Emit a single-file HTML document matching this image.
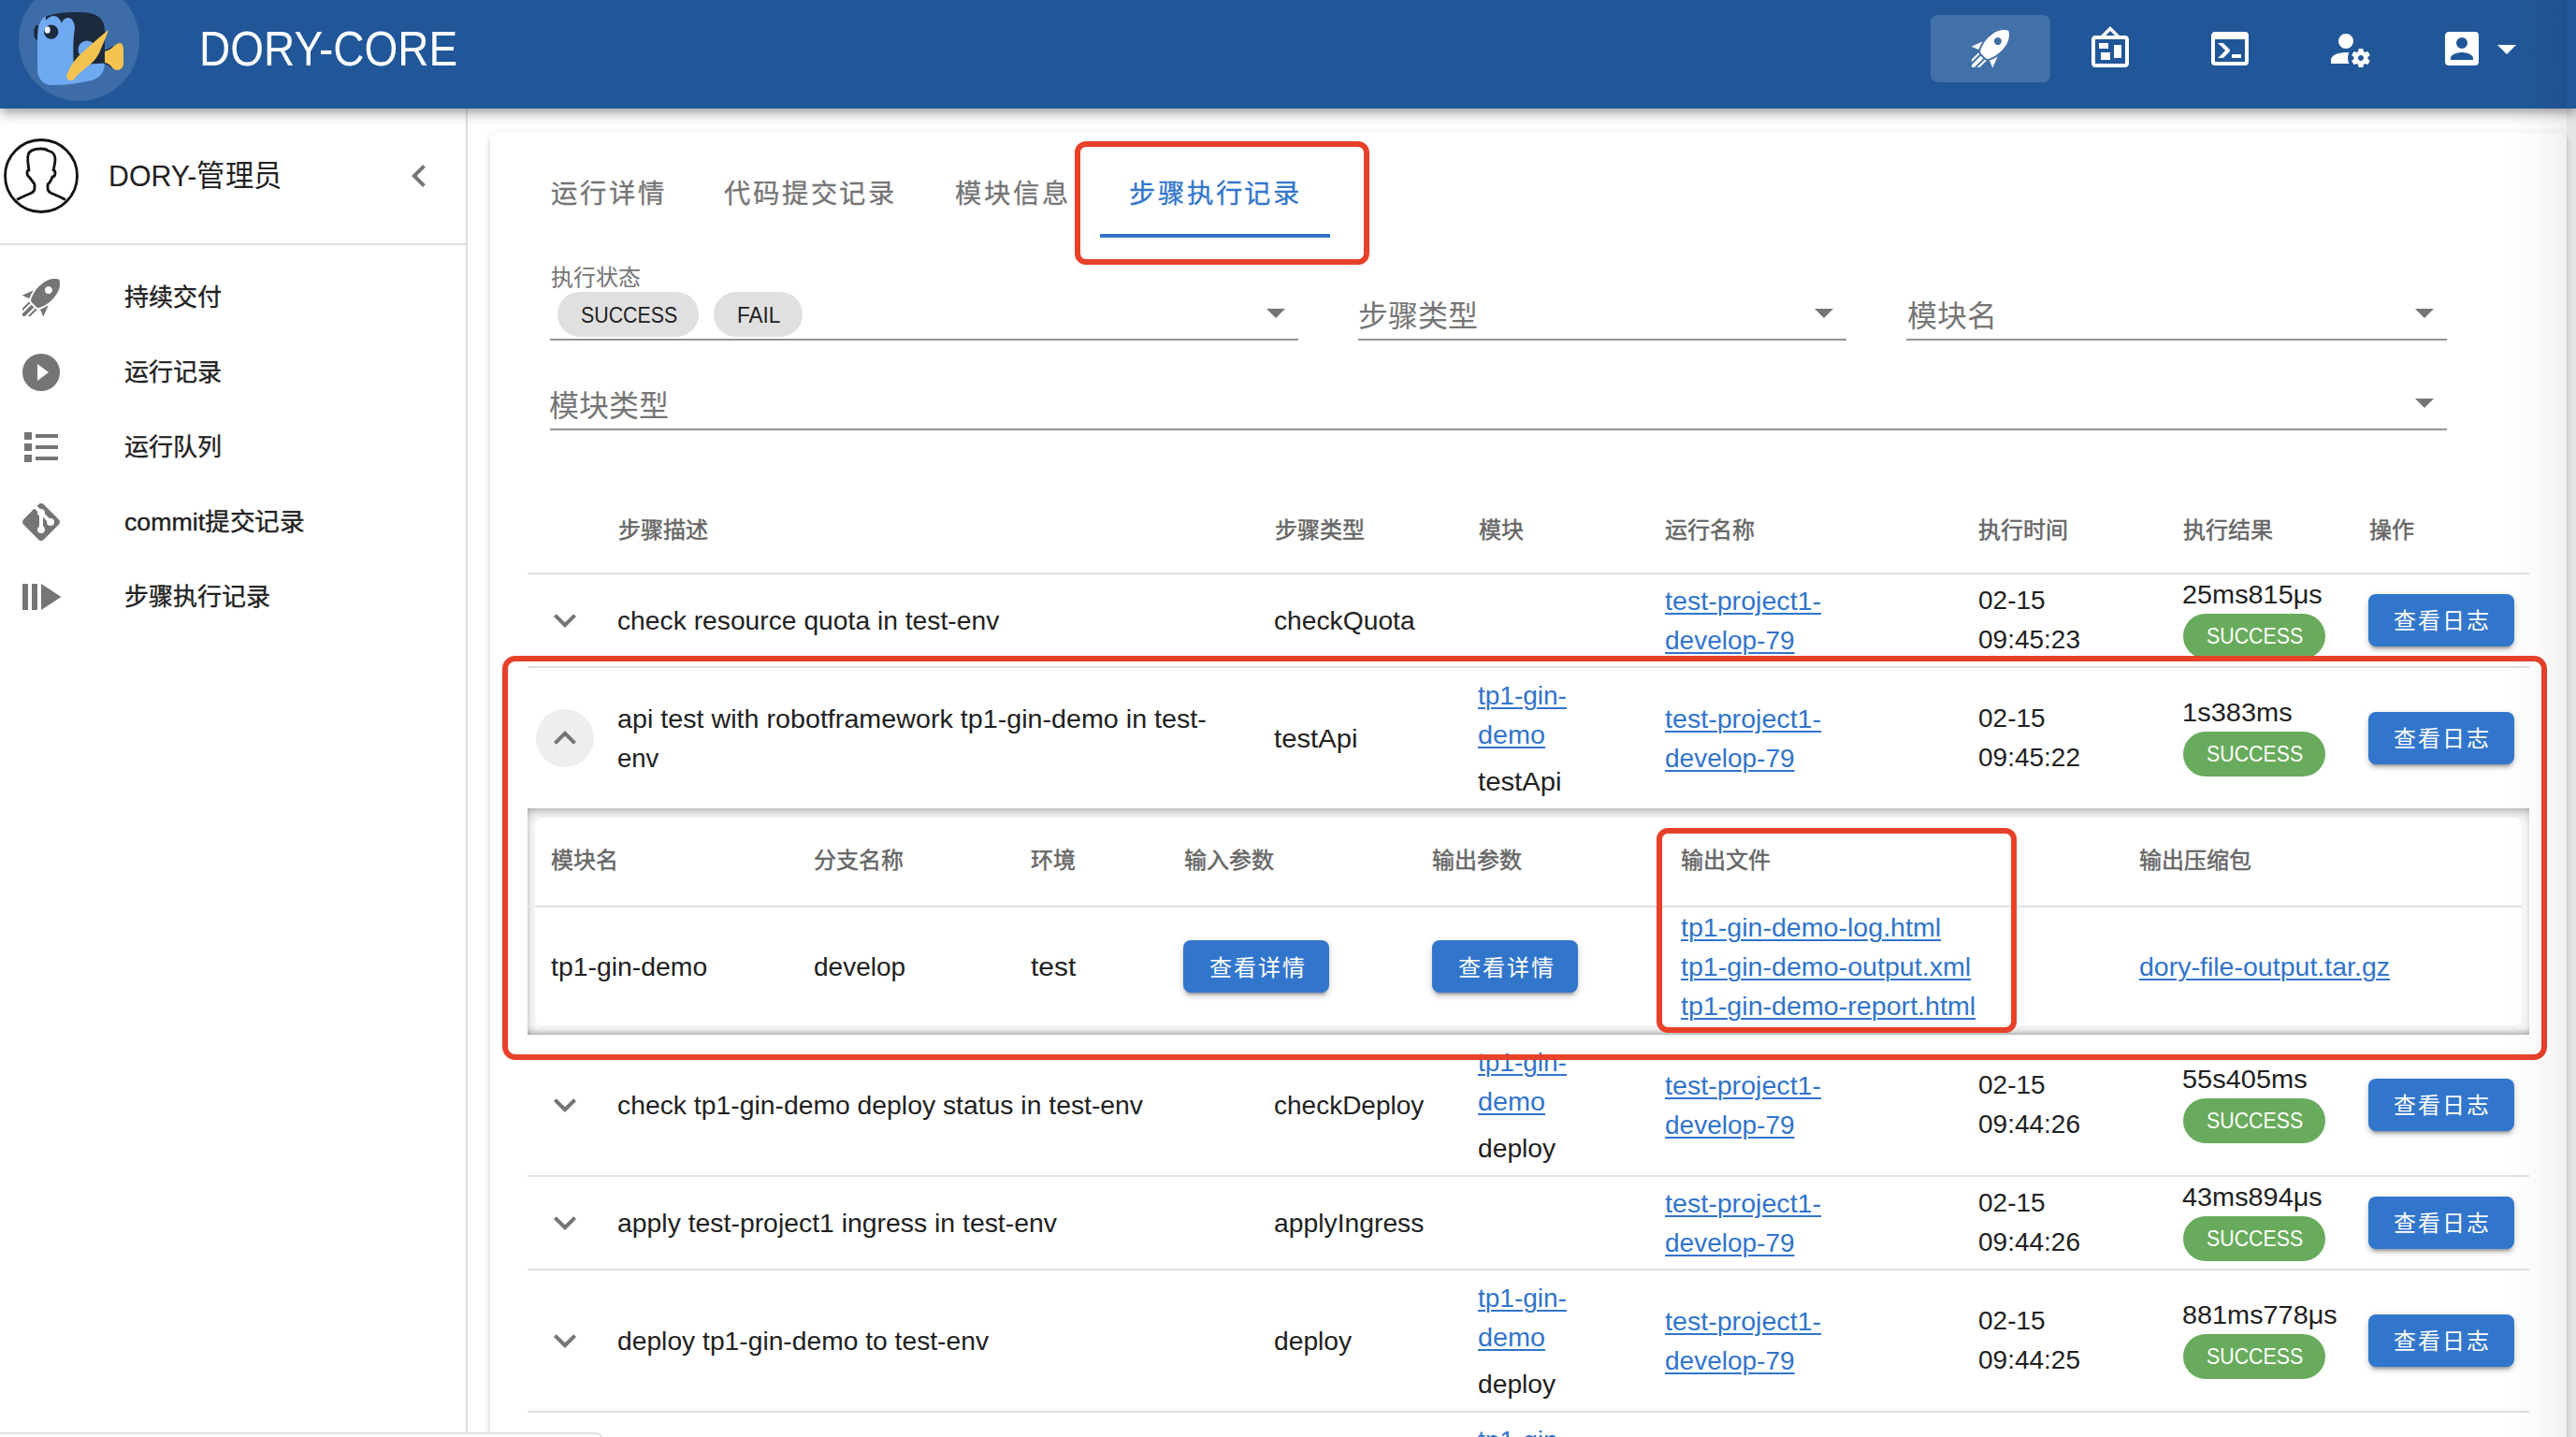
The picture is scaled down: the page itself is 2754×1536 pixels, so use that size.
<!DOCTYPE html>
<html lang="zh-CN"><head><meta charset="utf-8"><title>DORY-CORE</title>
<style>
html,body{margin:0;padding:0;width:2754px;height:1536px;overflow:hidden;background:#ffffff;}
body{position:relative;font-family:"Liberation Sans",sans-serif;}
.t{position:absolute;white-space:nowrap;transform-origin:0 50%;}
</style></head><body>
<div style="position:absolute;left:0px;top:0px;width:2754px;height:116px;background:#215799;border-radius:0px;z-index:3;box-shadow:0 4px 8px -2px rgba(0,0,0,.2),0 8px 10px 0 rgba(0,0,0,.14),0 2px 20px 0 rgba(0,0,0,.12);"></div>
<svg style="position:absolute;left:0;top:0;z-index:4" width="170" height="116" viewBox="0 0 170 116">
 <circle cx="84.5" cy="43.5" r="64.5" fill="rgba(255,255,255,.13)"/>
 <ellipse cx="39.5" cy="34.8" rx="3.3" ry="8" fill="#1c2a3e"/>
 <path fill="#6fa9f1" d="M40,43 C40,33 41,27 43,24 C45,20 47,18 49,17.5 L96,14 C106,15 112,22 112,32 L112,66 C112,76 108,83 98,86 C85,89 70,91 56,91 C46,91 40,84 40,74 Z"/>
 <path fill="#1c2a3e" d="M49,17.5 C62,13 82,12 96,14 C106,15.5 112,22 112,32 L112,67.5 C101,68 90,69 79,70 C78,58 78,40 80,31 C80,24 77,19 73,19 C70,19 67,21 66,25 C64,20 61,17 58,17 C54,17 51,19 49,22 Z"/>
 <circle cx="93" cy="53" r="9.5" fill="#6fa9f1"/>
 <circle cx="54.7" cy="34.1" r="7.7" fill="#1c2a3e"/>
 <ellipse cx="50.7" cy="32" rx="3" ry="3.8" fill="#e8f4ff"/>
 <path fill="none" stroke="#1c2a3e" stroke-width="1.6" d="M111,54.5 C115,54 118,52 121,49.5 M111,67.5 C115,68 118,70 120.5,72.5"/>
 <path fill="#f4c34f" d="M112,55 C116,54 119,52 121,50 C123,48 126,46 128,46 C131,46 132,49 132,53 L132,68 C132,72 129,75 125,75 C122,75 120,72 118,70 C116,68 114,67 112,67 Z"/>
 <path fill="#f4c34f" d="M116,32 C108,38 95,50 86,58 C79,65 75,71 73,77 C70,80 71,85 75,86 C78,86.5 80,85 81,82 C84,79 90,74 96,69 C101,65 105,60 108,52 C111,45 114,38 116,32 Z"/>
</svg>
<div style="position:absolute;left:2064px;top:16px;width:128px;height:72px;background:rgba(255,255,255,.15);border-radius:8px;z-index:4;"></div>
<svg style="position:absolute;left:2104px;top:28px;z-index:4" width="48" height="48" viewBox="0 0 24 24"><path fill="#ffffff" d="M13.13 22.19L11.5 18.36C13.07 17.78 14.54 17 15.9 16.09L13.13 22.19M5.64 12.5L1.81 10.87L7.91 8.1C7 9.46 6.22 10.93 5.64 12.5M21.61 2.39C21.61 2.39 16.66 .269 11 5.93C8.81 8.12 7.5 10.53 6.65 12.64C6.37 13.39 6.56 14.21 7.11 14.77L9.24 16.89C9.79 17.45 10.61 17.63 11.36 17.35C13.5 16.53 15.88 15.19 18.07 13C23.730 7.34 21.61 2.39 21.61 2.39M14.54 9.46C13.76 8.68 13.76 7.41 14.54 6.63S16.59 5.85 17.37 6.63C18.14 7.410 18.15 8.68 17.37 9.46C16.59 10.24 15.32 10.24 14.54 9.46M8.88 16.53L7.47 15.12L8.88 16.53M6.24 22L9.88 18.36C9.54 18.27 9.21 18.12 8.91 17.91L4.83 22H6.24M2 22H3.41L8.18 17.24L6.76 15.83L2 20.59V22M2 19.17L6.09 15.09C5.88 14.79 5.73 14.47 5.64 14.12L2 17.76V19.17Z"/></svg>
<svg style="position:absolute;left:2232px;top:28px;z-index:4" width="48" height="48" viewBox="0 0 24 24"><path fill="#ffffff" d="M12.04 2.5L9.53 5H14.53L12.04 2.5M4 7V20H20V7H4M12 0L17 5V5H20C21.11 5 22 5.89 22 7V20C22 21.11 21.11 22 20 22H4C2.89 22 2 21.11 2 20V7C2 5.89 2.89 5 4 5H7L12 0M7 18V14H12V18H7M14 17V10H18V17H14M6 12V9H11V12H6Z"/></svg>
<svg style="position:absolute;left:2360px;top:28px;z-index:4" width="48" height="48" viewBox="0 0 24 24"><path fill="#ffffff" d="M20,19V7H4V19H20M20,3A2,2 0 0,1 22,5V19A2,2 0 0,1 20,21H4A2,2 0 0,1 2,19V5C2,3.89 2.9,3 4,3H20M13,17V15H18V17H13M9.58,13L5.57,9H8.4L11.7,12.3C12.09,12.69 12.09,13.33 11.7,13.72L8.42,17H5.59L9.58,13Z"/></svg>
<svg style="position:absolute;left:2488px;top:28px;z-index:4" width="48" height="48" viewBox="0 0 24 24"><path fill="#ffffff" d="M10 4A4 4 0 0 0 6 8A4 4 0 0 0 10 12A4 4 0 0 0 14 8A4 4 0 0 0 10 4M17 12C16.87 12 16.76 12.09 16.74 12.21L16.55 13.53C16.25 13.66 15.96 13.82 15.7 14L14.46 13.5C14.35 13.5 14.22 13.5 14.15 13.63L13.15 15.36C13.09 15.47 13.11 15.6 13.21 15.68L14.27 16.5C14.25 16.67 14.24 16.83 14.24 17C14.24 17.17 14.25 17.33 14.27 17.5L13.21 18.32C13.12 18.4 13.09 18.53 13.15 18.64L14.15 20.37C14.21 20.5 14.34 20.5 14.46 20.5L15.7 20C15.96 20.18 16.24 20.35 16.55 20.47L16.74 21.79C16.76 21.91 16.86 22 17 22H19C19.11 22 19.22 21.91 19.24 21.79L19.43 20.47C19.73 20.34 20 20.18 20.27 20L21.5 20.5C21.63 20.5 21.76 20.5 21.83 20.37L22.83 18.64C22.89 18.53 22.86 18.4 22.77 18.32L21.7 17.5C21.72 17.33 21.74 17.17 21.74 17C21.74 16.83 21.73 16.67 21.7 16.5L22.76 15.68C22.85 15.6 22.88 15.47 22.82 15.36L21.82 13.63C21.76 13.5 21.63 13.5 21.5 13.5L20.27 14C20 13.82 19.73 13.65 19.42 13.53L19.23 12.21C19.22 12.09 19.11 12 19 12H17M10 14C5.58 14 2 15.79 2 18V20H11.68A7 7 0 0 1 11 17A7 7 0 0 1 11.64 14.09C11.11 14.03 10.56 14 10 14M18 15.5C18.83 15.5 19.5 16.17 19.5 17C19.5 17.83 18.83 18.5 18 18.5C17.16 18.5 16.5 17.83 16.5 17C16.5 16.17 17.17 15.5 18 15.5Z"/></svg>
<svg style="position:absolute;left:2608px;top:28px;z-index:4" width="48" height="48" viewBox="0 0 24 24"><path fill="#ffffff" d="M6,17C6,15 10,14 12,14C14,14 18,15 18,17V18H6M15,9A3,3 0 0,1 12,12A3,3 0 0,1 9,9A3,3 0 0,1 12,6A3,3 0 0,1 15,9M3,5V19A2,2 0 0,0 5,21H19A2,2 0 0,0 21,19V5A2,2 0 0,0 19,3H5C3.89,3 3,3.9 3,5Z"/></svg>
<svg style="position:absolute;left:2656px;top:28px;z-index:4" width="48" height="48" viewBox="0 0 24 24"><path fill="#ffffff" d="M7,10L12,15L17,10H7Z"/></svg>
<div style="position:absolute;left:498px;top:116px;width:2px;height:1420px;background:#e0e0e0;border-radius:0px;z-index:1;"></div>
<svg style="position:absolute;left:0;top:140px;z-index:2" width="100" height="100" viewBox="0 140 100 100">
 <circle cx="44" cy="188" r="38.5" fill="none" stroke="#111" stroke-width="2.8"/>
 <path fill="none" stroke="#111" stroke-width="2.8" stroke-linejoin="round" d="M18,213.5 C24,210 30,208 34,206 C36,205 37,203 37,201 L37,197 C34,193 32,190 31,189 C29,188 29,186 29,184.5 C29,183 30,182 31,182 C30,176 29,170 30,166 C31,161 35,159 44,159 C48,159 50,160 51,161 C56,162 59,165 59,170 C59,174 58,178 57,182 C58,182 59,183 59,185 C59,187 58,189 56,189 C55,192 54,195 51,197 L51,201 C51,203 52,205 54,206 C58,208 64,210 70,213.5"/>
</svg>
<svg style="position:absolute;left:424px;top:164px;z-index:2" width="48" height="48" viewBox="0 0 24 24"><path fill="#757575" d="M15.41,16.58L10.83,12L15.41,7.41L14,6L8,12L14,18L15.41,16.58Z"/></svg>
<div style="position:absolute;left:0px;top:260px;width:498px;height:2px;background:#e0e0e0;border-radius:0px;z-index:1;"></div>
<svg style="position:absolute;left:20px;top:294px;z-index:2" width="48" height="48" viewBox="0 0 24 24"><path fill="#757575" d="M13.13 22.19L11.5 18.36C13.07 17.78 14.54 17 15.9 16.09L13.13 22.19M5.64 12.5L1.81 10.87L7.91 8.1C7 9.46 6.22 10.93 5.64 12.5M21.61 2.39C21.61 2.39 16.66 .269 11 5.93C8.81 8.12 7.5 10.53 6.65 12.64C6.37 13.39 6.56 14.21 7.11 14.77L9.24 16.89C9.79 17.45 10.61 17.63 11.36 17.35C13.5 16.53 15.88 15.19 18.07 13C23.730 7.34 21.61 2.39 21.61 2.39M14.54 9.46C13.76 8.68 13.76 7.41 14.54 6.63S16.59 5.85 17.37 6.63C18.14 7.410 18.15 8.68 17.37 9.46C16.59 10.24 15.32 10.24 14.54 9.46M8.88 16.53L7.47 15.12L8.88 16.53M6.24 22L9.88 18.36C9.54 18.27 9.21 18.12 8.91 17.91L4.83 22H6.24M2 22H3.41L8.18 17.24L6.76 15.83L2 20.59V22M2 19.17L6.09 15.09C5.88 14.79 5.73 14.47 5.64 14.12L2 17.76V19.17Z"/></svg>
<svg style="position:absolute;left:20px;top:374px;z-index:2" width="48" height="48" viewBox="0 0 24 24"><path fill="#757575" d="M10,16.5V7.5L16,12M12,2A10,10 0 0,0 2,12A10,10 0 0,0 12,22A10,10 0 0,0 22,12A10,10 0 0,0 12,2Z"/></svg>
<svg style="position:absolute;left:20px;top:454px;z-index:2" width="48" height="48" viewBox="0 0 24 24"><path fill="#757575" d="M3,4H7V8H3V4M9,5V7H21V5H9M3,10H7V14H3V10M9,11V13H21V11H9M3,16H7V20H3V16M9,17V19H21V17H9"/></svg>
<svg style="position:absolute;left:20px;top:534px;z-index:2" width="48" height="48" viewBox="0 0 24 24"><path fill="#757575" d="M2.6,10.59L8.38,4.8L10.07,6.5C9.83,7.35 10.22,8.28 11,8.73V14.27C10.4,14.61 10,15.26 10,16A2,2 0 0,0 12,18A2,2 0 0,0 14,16C14,15.26 13.6,14.61 13,14.27V9.41L15.07,11.5C15,11.65 15,11.82 15,12A2,2 0 0,0 17,14A2,2 0 0,0 19,12A2,2 0 0,0 17,10C16.82,10 16.65,10 16.5,10.07L13.93,7.5C14.19,6.57 13.71,5.55 12.78,5.16C12.35,5 11.9,4.96 11.5,5.07L9.8,3.38L10.59,2.6C11.37,1.81 12.63,1.81 13.41,2.6L21.4,10.59C22.19,11.37 22.19,12.63 21.4,13.41L13.41,21.4C12.63,22.19 11.37,22.19 10.59,21.4L2.6,13.41C1.81,12.63 1.81,11.37 2.6,10.59Z"/></svg>
<svg style="position:absolute;left:20px;top:614px;z-index:2" width="48" height="48" viewBox="0 0 24 24"><path fill="#757575" d="M2,5H5V19H2Z M7,5H10V19H7Z M12,5V19L22.7,12Z"/></svg>
<div style="position:absolute;left:524px;top:142px;width:2220px;height:1500px;background:#ffffff;border-radius:8px;z-index:0;box-shadow:0 6px 2px -4px rgba(0,0,0,.2),0 4px 4px 0 rgba(0,0,0,.14),0 2px 10px 0 rgba(0,0,0,.12);"></div>
<div style="position:absolute;left:1176px;top:250px;width:246px;height:4px;background:#3276cc;border-radius:0px;z-index:1;"></div>
<div style="position:absolute;left:596px;top:312px;width:151px;height:48px;background:#e0e0e0;border-radius:24px;z-index:1;"></div>
<div style="position:absolute;left:763px;top:312px;width:95px;height:48px;background:#e0e0e0;border-radius:24px;z-index:1;"></div>
<div style="position:absolute;left:588px;top:362px;width:800px;height:2px;background:#949494;border-radius:0px;z-index:1;"></div>
<svg style="position:absolute;left:1340px;top:310px;z-index:2" width="48" height="48" viewBox="0 0 24 24"><path fill="#757575" d="M7,10L12,15L17,10H7Z"/></svg>
<div style="position:absolute;left:1452px;top:362px;width:522px;height:2px;background:#949494;border-radius:0px;z-index:1;"></div>
<svg style="position:absolute;left:1926px;top:310px;z-index:2" width="48" height="48" viewBox="0 0 24 24"><path fill="#757575" d="M7,10L12,15L17,10H7Z"/></svg>
<div style="position:absolute;left:2038px;top:362px;width:578px;height:2px;background:#949494;border-radius:0px;z-index:1;"></div>
<svg style="position:absolute;left:2568px;top:310px;z-index:2" width="48" height="48" viewBox="0 0 24 24"><path fill="#757575" d="M7,10L12,15L17,10H7Z"/></svg>
<div style="position:absolute;left:588px;top:458px;width:2028px;height:2px;background:#949494;border-radius:0px;z-index:1;"></div>
<svg style="position:absolute;left:2568px;top:406px;z-index:2" width="48" height="48" viewBox="0 0 24 24"><path fill="#757575" d="M7,10L12,15L17,10H7Z"/></svg>
<div style="position:absolute;left:564px;top:612px;width:2140px;height:2px;background:#e0e0e0;border-radius:0px;z-index:1;"></div>
<svg style="position:absolute;left:580px;top:639px;z-index:2" width="48" height="48" viewBox="0 0 24 24"><path fill="#757575" d="M7.41,8.58L12,13.17L16.59,8.58L18,10L12,16L6,10L7.41,8.58Z"/></svg>
<div style="position:absolute;left:2334px;top:656px;width:152px;height:48px;background:#69ab5c;border-radius:24px;z-index:1;"></div>
<div style="position:absolute;left:2532px;top:635px;width:156px;height:56px;background:#3276cc;border-radius:8px;z-index:1;box-shadow:0 6px 2px -4px rgba(0,0,0,.2),0 4px 4px 0 rgba(0,0,0,.14),0 2px 10px 0 rgba(0,0,0,.12);"></div>
<div style="position:absolute;left:564px;top:712px;width:2140px;height:2px;background:#e0e0e0;border-radius:0px;z-index:1;"></div>
<div style="position:absolute;left:573px;top:758px;width:62px;height:62px;background:#eeeeee;border-radius:31px;z-index:1;"></div>
<svg style="position:absolute;left:580px;top:765px;z-index:2" width="48" height="48" viewBox="0 0 24 24"><path fill="#757575" d="M7.41,15.41L12,10.83L16.59,15.41L18,14L12,8L6,14L7.41,15.41Z"/></svg>
<div style="position:absolute;left:2334px;top:782px;width:152px;height:48px;background:#69ab5c;border-radius:24px;z-index:1;"></div>
<div style="position:absolute;left:2532px;top:761px;width:156px;height:56px;background:#3276cc;border-radius:8px;z-index:1;box-shadow:0 6px 2px -4px rgba(0,0,0,.2),0 4px 4px 0 rgba(0,0,0,.14),0 2px 10px 0 rgba(0,0,0,.12);"></div>
<div style="position:absolute;left:564px;top:864px;width:2140px;height:242px;background:#fbfbfb;border-radius:0px;z-index:1;box-shadow:inset 0 8px 16px -10px rgba(50,50,50,.75),inset 0 -7px 10px -7px rgba(50,50,50,.7),inset 10px 0 10px -8px rgba(0,0,0,.10);"></div>
<div style="position:absolute;left:572px;top:874px;width:2124px;height:222px;background:#ffffff;border-radius:8px;z-index:1;box-shadow:0 1px 4px 0 rgba(0,0,0,.05);"></div>
<div style="position:absolute;left:572px;top:968px;width:2124px;height:2px;background:#e0e0e0;border-radius:0px;z-index:1;"></div>
<div style="position:absolute;left:1265px;top:1005px;width:156px;height:56px;background:#3276cc;border-radius:8px;z-index:1;box-shadow:0 6px 2px -4px rgba(0,0,0,.2),0 4px 4px 0 rgba(0,0,0,.14),0 2px 10px 0 rgba(0,0,0,.12);"></div>
<div style="position:absolute;left:1531px;top:1005px;width:156px;height:56px;background:#3276cc;border-radius:8px;z-index:1;box-shadow:0 6px 2px -4px rgba(0,0,0,.2),0 4px 4px 0 rgba(0,0,0,.14),0 2px 10px 0 rgba(0,0,0,.12);"></div>
<svg style="position:absolute;left:580px;top:1157px;z-index:2" width="48" height="48" viewBox="0 0 24 24"><path fill="#757575" d="M7.41,8.58L12,13.17L16.59,8.58L18,10L12,16L6,10L7.41,8.58Z"/></svg>
<div style="position:absolute;left:2334px;top:1174px;width:152px;height:48px;background:#69ab5c;border-radius:24px;z-index:1;"></div>
<div style="position:absolute;left:2532px;top:1153px;width:156px;height:56px;background:#3276cc;border-radius:8px;z-index:1;box-shadow:0 6px 2px -4px rgba(0,0,0,.2),0 4px 4px 0 rgba(0,0,0,.14),0 2px 10px 0 rgba(0,0,0,.12);"></div>
<div style="position:absolute;left:564px;top:1256px;width:2140px;height:2px;background:#e0e0e0;border-radius:0px;z-index:1;"></div>
<svg style="position:absolute;left:580px;top:1283px;z-index:2" width="48" height="48" viewBox="0 0 24 24"><path fill="#757575" d="M7.41,8.58L12,13.17L16.59,8.58L18,10L12,16L6,10L7.41,8.58Z"/></svg>
<div style="position:absolute;left:2334px;top:1300px;width:152px;height:48px;background:#69ab5c;border-radius:24px;z-index:1;"></div>
<div style="position:absolute;left:2532px;top:1279px;width:156px;height:56px;background:#3276cc;border-radius:8px;z-index:1;box-shadow:0 6px 2px -4px rgba(0,0,0,.2),0 4px 4px 0 rgba(0,0,0,.14),0 2px 10px 0 rgba(0,0,0,.12);"></div>
<div style="position:absolute;left:564px;top:1356px;width:2140px;height:2px;background:#e0e0e0;border-radius:0px;z-index:1;"></div>
<svg style="position:absolute;left:580px;top:1409px;z-index:2" width="48" height="48" viewBox="0 0 24 24"><path fill="#757575" d="M7.41,8.58L12,13.17L16.59,8.58L18,10L12,16L6,10L7.41,8.58Z"/></svg>
<div style="position:absolute;left:2334px;top:1426px;width:152px;height:48px;background:#69ab5c;border-radius:24px;z-index:1;"></div>
<div style="position:absolute;left:2532px;top:1405px;width:156px;height:56px;background:#3276cc;border-radius:8px;z-index:1;box-shadow:0 6px 2px -4px rgba(0,0,0,.2),0 4px 4px 0 rgba(0,0,0,.14),0 2px 10px 0 rgba(0,0,0,.12);"></div>
<div style="position:absolute;left:564px;top:1508px;width:2140px;height:2px;background:#e0e0e0;border-radius:0px;z-index:1;"></div>
<svg style="position:absolute;left:580px;top:1561px;z-index:2" width="48" height="48" viewBox="0 0 24 24"><path fill="#757575" d="M7.41,8.58L12,13.17L16.59,8.58L18,10L12,16L6,10L7.41,8.58Z"/></svg>
<div style="position:absolute;left:2334px;top:1578px;width:152px;height:48px;background:#69ab5c;border-radius:24px;z-index:1;"></div>
<div style="position:absolute;left:2532px;top:1557px;width:156px;height:56px;background:#3276cc;border-radius:8px;z-index:1;box-shadow:0 6px 2px -4px rgba(0,0,0,.2),0 4px 4px 0 rgba(0,0,0,.14),0 2px 10px 0 rgba(0,0,0,.12);"></div>
<div style="position:absolute;left:-10px;top:1531px;width:655px;height:60px;background:#ffffff;border-radius:8px;z-index:3;border:2px solid #e3e3e3;box-sizing:border-box;"></div>
<div class="t" style="left:213px;top:22.0px;font-size:52px;line-height:60px;color:#ffffff;font-weight:400;z-index:4;transform:scaleX(0.8851);">DORY-CORE</div>
<div class="t" style="left:115.7px;top:167.9px;font-size:32px;line-height:40px;color:#212121;font-weight:400;z-index:2;transform:scaleX(0.9470);">DORY-管理员</div>
<div class="t" style="left:133px;top:302.0px;font-size:26px;line-height:32px;color:#212121;font-weight:500;z-index:2;-webkit-text-stroke:0.35px #212121;">持续交付</div>
<div class="t" style="left:133px;top:382.0px;font-size:26px;line-height:32px;color:#212121;font-weight:500;z-index:2;-webkit-text-stroke:0.35px #212121;">运行记录</div>
<div class="t" style="left:133px;top:462.0px;font-size:26px;line-height:32px;color:#212121;font-weight:500;z-index:2;-webkit-text-stroke:0.35px #212121;">运行队列</div>
<div class="t" style="left:133px;top:542.0px;font-size:26px;line-height:32px;color:#212121;font-weight:500;z-index:2;-webkit-text-stroke:0.35px #212121;transform:scaleX(1.0273);">commit提交记录</div>
<div class="t" style="left:133px;top:622.0px;font-size:26px;line-height:32px;color:#212121;font-weight:500;z-index:2;-webkit-text-stroke:0.35px #212121;">步骤执行记录</div>
<div class="t" style="left:588.6px;top:187.3px;font-size:28px;line-height:42px;color:#757575;font-weight:500;z-index:2;letter-spacing:2.5px;-webkit-text-stroke:0.3px #757575;transform:scaleX(1.0120);">运行详情</div>
<div class="t" style="left:773.5px;top:187.3px;font-size:28px;line-height:42px;color:#757575;font-weight:500;z-index:2;letter-spacing:2.5px;-webkit-text-stroke:0.3px #757575;transform:scaleX(1.0120);">代码提交记录</div>
<div class="t" style="left:1021px;top:187.3px;font-size:28px;line-height:42px;color:#757575;font-weight:500;z-index:2;letter-spacing:2.5px;-webkit-text-stroke:0.3px #757575;transform:scaleX(1.0120);">模块信息</div>
<div class="t" style="left:1206.8px;top:187.3px;font-size:28px;line-height:42px;color:#3276cc;font-weight:500;z-index:2;letter-spacing:2.5px;-webkit-text-stroke:0.3px #3276cc;transform:scaleX(1.0120);">步骤执行记录</div>
<div class="t" style="left:588.6px;top:281.2px;font-size:24px;line-height:32px;color:#757575;font-weight:400;z-index:2;">执行状态</div>
<div class="t" style="left:621px;top:320.7px;font-size:24px;line-height:32px;color:#212121;font-weight:400;z-index:2;transform:scaleX(0.8894);">SUCCESS</div>
<div class="t" style="left:787.5px;top:320.7px;font-size:24px;line-height:32px;color:#212121;font-weight:400;z-index:2;transform:scaleX(0.9399);">FAIL</div>
<div class="t" style="left:1451.5px;top:317.9px;font-size:32px;line-height:40px;color:#757575;font-weight:400;z-index:2;">步骤类型</div>
<div class="t" style="left:2039px;top:317.9px;font-size:32px;line-height:40px;color:#757575;font-weight:400;z-index:2;">模块名</div>
<div class="t" style="left:587px;top:413.9px;font-size:32px;line-height:40px;color:#757575;font-weight:400;z-index:2;">模块类型</div>
<div class="t" style="left:661.3px;top:550.7px;font-size:24px;line-height:32px;color:#666666;font-weight:400;z-index:2;-webkit-text-stroke:0.5px #666666;">步骤描述</div>
<div class="t" style="left:1362.8px;top:550.7px;font-size:24px;line-height:32px;color:#666666;font-weight:400;z-index:2;-webkit-text-stroke:0.5px #666666;">步骤类型</div>
<div class="t" style="left:1581px;top:550.7px;font-size:24px;line-height:32px;color:#666666;font-weight:400;z-index:2;-webkit-text-stroke:0.5px #666666;">模块</div>
<div class="t" style="left:1779.8px;top:550.7px;font-size:24px;line-height:32px;color:#666666;font-weight:400;z-index:2;-webkit-text-stroke:0.5px #666666;">运行名称</div>
<div class="t" style="left:2115.3px;top:550.7px;font-size:24px;line-height:32px;color:#666666;font-weight:400;z-index:2;-webkit-text-stroke:0.5px #666666;">执行时间</div>
<div class="t" style="left:2334.3px;top:550.7px;font-size:24px;line-height:32px;color:#666666;font-weight:400;z-index:2;-webkit-text-stroke:0.5px #666666;">执行结果</div>
<div class="t" style="left:2532.6px;top:550.7px;font-size:24px;line-height:32px;color:#666666;font-weight:400;z-index:2;-webkit-text-stroke:0.5px #666666;">操作</div>
<div class="t" style="left:660px;top:643.3px;font-size:28px;line-height:42px;color:#212121;font-weight:400;z-index:2;transform:scaleX(1.0089);">check resource quota in test-env</div>
<div class="t" style="left:1362px;top:643.3px;font-size:28px;line-height:42px;color:#212121;font-weight:400;z-index:2;transform:scaleX(1.0081);">checkQuota</div>
<div class="t" style="left:1780px;top:622.3px;font-size:28px;line-height:42px;color:#3174cb;font-weight:400;z-index:2;text-decoration:underline;text-underline-offset:3px;text-decoration-thickness:2px;transform:scaleX(1.0225);">test-project1-</div>
<div class="t" style="left:1780px;top:664.3px;font-size:28px;line-height:42px;color:#3174cb;font-weight:400;z-index:2;text-decoration:underline;text-underline-offset:3px;text-decoration-thickness:2px;">develop-79</div>
<div class="t" style="left:2115px;top:621.3px;font-size:28px;line-height:42px;color:#212121;font-weight:400;z-index:2;">02-15</div>
<div class="t" style="left:2115px;top:663.3px;font-size:28px;line-height:42px;color:#212121;font-weight:400;z-index:2;">09:45:23</div>
<div class="t" style="left:2333px;top:615.3px;font-size:28px;line-height:42px;color:#212121;font-weight:400;z-index:2;transform:scaleX(1.0307);">25ms815μs</div>
<div class="t" style="left:2358.6px;top:664.3px;font-size:24px;line-height:32px;color:#ffffff;font-weight:400;z-index:2;transform:scaleX(0.8894);">SUCCESS</div>
<div class="t" style="left:2559px;top:647.7px;font-size:24px;line-height:32px;color:#ffffff;font-weight:500;z-index:2;letter-spacing:2.14px;">查看日志</div>
<div class="t" style="left:660px;top:748.3px;font-size:28px;line-height:42px;color:#212121;font-weight:400;z-index:2;transform:scaleX(1.0247);">api test with robotframework tp1-gin-demo in test-</div>
<div class="t" style="left:660px;top:790.3px;font-size:28px;line-height:42px;color:#212121;font-weight:400;z-index:2;transform:scaleX(0.9833);">env</div>
<div class="t" style="left:1362px;top:769.3px;font-size:28px;line-height:42px;color:#212121;font-weight:400;z-index:2;transform:scaleX(1.0452);">testApi</div>
<div class="t" style="left:1580px;top:723.3px;font-size:28px;line-height:42px;color:#3174cb;font-weight:400;z-index:2;text-decoration:underline;text-underline-offset:3px;text-decoration-thickness:2px;">tp1-gin-</div>
<div class="t" style="left:1580px;top:765.3px;font-size:28px;line-height:42px;color:#3174cb;font-weight:400;z-index:2;text-decoration:underline;text-underline-offset:3px;text-decoration-thickness:2px;transform:scaleX(1.0283);">demo</div>
<div class="t" style="left:1580px;top:815.3px;font-size:28px;line-height:42px;color:#212121;font-weight:400;z-index:2;transform:scaleX(1.0452);">testApi</div>
<div class="t" style="left:1780px;top:748.3px;font-size:28px;line-height:42px;color:#3174cb;font-weight:400;z-index:2;text-decoration:underline;text-underline-offset:3px;text-decoration-thickness:2px;transform:scaleX(1.0225);">test-project1-</div>
<div class="t" style="left:1780px;top:790.3px;font-size:28px;line-height:42px;color:#3174cb;font-weight:400;z-index:2;text-decoration:underline;text-underline-offset:3px;text-decoration-thickness:2px;">develop-79</div>
<div class="t" style="left:2115px;top:747.3px;font-size:28px;line-height:42px;color:#212121;font-weight:400;z-index:2;">02-15</div>
<div class="t" style="left:2115px;top:789.3px;font-size:28px;line-height:42px;color:#212121;font-weight:400;z-index:2;">09:45:22</div>
<div class="t" style="left:2333px;top:741.3px;font-size:28px;line-height:42px;color:#212121;font-weight:400;z-index:2;transform:scaleX(1.0368);">1s383ms</div>
<div class="t" style="left:2358.6px;top:790.3px;font-size:24px;line-height:32px;color:#ffffff;font-weight:400;z-index:2;transform:scaleX(0.8894);">SUCCESS</div>
<div class="t" style="left:2559px;top:773.7px;font-size:24px;line-height:32px;color:#ffffff;font-weight:500;z-index:2;letter-spacing:2.14px;">查看日志</div>
<div class="t" style="left:588.7px;top:903.7px;font-size:24px;line-height:32px;color:#666666;font-weight:400;z-index:2;-webkit-text-stroke:0.5px #666666;">模块名</div>
<div class="t" style="left:870px;top:903.7px;font-size:24px;line-height:32px;color:#666666;font-weight:400;z-index:2;-webkit-text-stroke:0.5px #666666;">分支名称</div>
<div class="t" style="left:1101.7px;top:903.7px;font-size:24px;line-height:32px;color:#666666;font-weight:400;z-index:2;-webkit-text-stroke:0.5px #666666;">环境</div>
<div class="t" style="left:1265.7px;top:903.7px;font-size:24px;line-height:32px;color:#666666;font-weight:400;z-index:2;-webkit-text-stroke:0.5px #666666;">输入参数</div>
<div class="t" style="left:1531.3px;top:903.7px;font-size:24px;line-height:32px;color:#666666;font-weight:400;z-index:2;-webkit-text-stroke:0.5px #666666;">输出参数</div>
<div class="t" style="left:1796.6px;top:903.7px;font-size:24px;line-height:32px;color:#666666;font-weight:400;z-index:2;-webkit-text-stroke:0.5px #666666;">输出文件</div>
<div class="t" style="left:2286.6px;top:903.7px;font-size:24px;line-height:32px;color:#666666;font-weight:400;z-index:2;-webkit-text-stroke:0.5px #666666;">输出压缩包</div>
<div class="t" style="left:588.7px;top:1012.9px;font-size:28px;line-height:42px;color:#212121;font-weight:400;z-index:2;transform:scaleX(1.0137);">tp1-gin-demo</div>
<div class="t" style="left:870px;top:1012.9px;font-size:28px;line-height:42px;color:#212121;font-weight:400;z-index:2;">develop</div>
<div class="t" style="left:1101.7px;top:1012.9px;font-size:28px;line-height:42px;color:#212121;font-weight:400;z-index:2;transform:scaleX(1.0677);">test</div>
<div class="t" style="left:1293px;top:1018.7px;font-size:24px;line-height:32px;color:#ffffff;font-weight:500;z-index:2;letter-spacing:2.14px;">查看详情</div>
<div class="t" style="left:1559px;top:1018.7px;font-size:24px;line-height:32px;color:#ffffff;font-weight:500;z-index:2;letter-spacing:2.14px;">查看详情</div>
<div class="t" style="left:1796.6px;top:970.9px;font-size:28px;line-height:42px;color:#3174cb;font-weight:400;z-index:2;text-decoration:underline;text-underline-offset:3px;text-decoration-thickness:2px;transform:scaleX(1.0212);">tp1-gin-demo-log.html</div>
<div class="t" style="left:1796.6px;top:1012.9px;font-size:28px;line-height:42px;color:#3174cb;font-weight:400;z-index:2;text-decoration:underline;text-underline-offset:3px;text-decoration-thickness:2px;transform:scaleX(1.0221);">tp1-gin-demo-output.xml</div>
<div class="t" style="left:1796.6px;top:1054.9px;font-size:28px;line-height:42px;color:#3174cb;font-weight:400;z-index:2;text-decoration:underline;text-underline-offset:3px;text-decoration-thickness:2px;transform:scaleX(1.0228);">tp1-gin-demo-report.html</div>
<div class="t" style="left:2286.6px;top:1013.3px;font-size:28px;line-height:42px;color:#3174cb;font-weight:400;z-index:2;text-decoration:underline;text-underline-offset:3px;text-decoration-thickness:2px;transform:scaleX(1.0190);">dory-file-output.tar.gz</div>
<div class="t" style="left:660px;top:1161.3px;font-size:28px;line-height:42px;color:#212121;font-weight:400;z-index:2;transform:scaleX(1.0115);">check tp1-gin-demo deploy status in test-env</div>
<div class="t" style="left:1362px;top:1161.3px;font-size:28px;line-height:42px;color:#212121;font-weight:400;z-index:2;">checkDeploy</div>
<div class="t" style="left:1580px;top:1115.3px;font-size:28px;line-height:42px;color:#3174cb;font-weight:400;z-index:2;text-decoration:underline;text-underline-offset:3px;text-decoration-thickness:2px;">tp1-gin-</div>
<div class="t" style="left:1580px;top:1157.3px;font-size:28px;line-height:42px;color:#3174cb;font-weight:400;z-index:2;text-decoration:underline;text-underline-offset:3px;text-decoration-thickness:2px;transform:scaleX(1.0283);">demo</div>
<div class="t" style="left:1580px;top:1207.3px;font-size:28px;line-height:42px;color:#212121;font-weight:400;z-index:2;transform:scaleX(1.0080);">deploy</div>
<div class="t" style="left:1780px;top:1140.3px;font-size:28px;line-height:42px;color:#3174cb;font-weight:400;z-index:2;text-decoration:underline;text-underline-offset:3px;text-decoration-thickness:2px;transform:scaleX(1.0225);">test-project1-</div>
<div class="t" style="left:1780px;top:1182.3px;font-size:28px;line-height:42px;color:#3174cb;font-weight:400;z-index:2;text-decoration:underline;text-underline-offset:3px;text-decoration-thickness:2px;">develop-79</div>
<div class="t" style="left:2115px;top:1139.3px;font-size:28px;line-height:42px;color:#212121;font-weight:400;z-index:2;">02-15</div>
<div class="t" style="left:2115px;top:1181.3px;font-size:28px;line-height:42px;color:#212121;font-weight:400;z-index:2;">09:44:26</div>
<div class="t" style="left:2333px;top:1133.3px;font-size:28px;line-height:42px;color:#212121;font-weight:400;z-index:2;transform:scaleX(1.0351);">55s405ms</div>
<div class="t" style="left:2358.6px;top:1182.3px;font-size:24px;line-height:32px;color:#ffffff;font-weight:400;z-index:2;transform:scaleX(0.8894);">SUCCESS</div>
<div class="t" style="left:2559px;top:1165.7px;font-size:24px;line-height:32px;color:#ffffff;font-weight:500;z-index:2;letter-spacing:2.14px;">查看日志</div>
<div class="t" style="left:660px;top:1287.3px;font-size:28px;line-height:42px;color:#212121;font-weight:400;z-index:2;transform:scaleX(1.0133);">apply test-project1 ingress in test-env</div>
<div class="t" style="left:1362px;top:1287.3px;font-size:28px;line-height:42px;color:#212121;font-weight:400;z-index:2;transform:scaleX(1.0104);">applyIngress</div>
<div class="t" style="left:1780px;top:1266.3px;font-size:28px;line-height:42px;color:#3174cb;font-weight:400;z-index:2;text-decoration:underline;text-underline-offset:3px;text-decoration-thickness:2px;transform:scaleX(1.0225);">test-project1-</div>
<div class="t" style="left:1780px;top:1308.3px;font-size:28px;line-height:42px;color:#3174cb;font-weight:400;z-index:2;text-decoration:underline;text-underline-offset:3px;text-decoration-thickness:2px;">develop-79</div>
<div class="t" style="left:2115px;top:1265.3px;font-size:28px;line-height:42px;color:#212121;font-weight:400;z-index:2;">02-15</div>
<div class="t" style="left:2115px;top:1307.3px;font-size:28px;line-height:42px;color:#212121;font-weight:400;z-index:2;">09:44:26</div>
<div class="t" style="left:2333px;top:1259.3px;font-size:28px;line-height:42px;color:#212121;font-weight:400;z-index:2;transform:scaleX(1.0307);">43ms894μs</div>
<div class="t" style="left:2358.6px;top:1308.3px;font-size:24px;line-height:32px;color:#ffffff;font-weight:400;z-index:2;transform:scaleX(0.8894);">SUCCESS</div>
<div class="t" style="left:2559px;top:1291.7px;font-size:24px;line-height:32px;color:#ffffff;font-weight:500;z-index:2;letter-spacing:2.14px;">查看日志</div>
<div class="t" style="left:660px;top:1413.3px;font-size:28px;line-height:42px;color:#212121;font-weight:400;z-index:2;transform:scaleX(1.0083);">deploy tp1-gin-demo to test-env</div>
<div class="t" style="left:1362px;top:1413.3px;font-size:28px;line-height:42px;color:#212121;font-weight:400;z-index:2;transform:scaleX(1.0080);">deploy</div>
<div class="t" style="left:1580px;top:1367.3px;font-size:28px;line-height:42px;color:#3174cb;font-weight:400;z-index:2;text-decoration:underline;text-underline-offset:3px;text-decoration-thickness:2px;">tp1-gin-</div>
<div class="t" style="left:1580px;top:1409.3px;font-size:28px;line-height:42px;color:#3174cb;font-weight:400;z-index:2;text-decoration:underline;text-underline-offset:3px;text-decoration-thickness:2px;transform:scaleX(1.0283);">demo</div>
<div class="t" style="left:1580px;top:1459.3px;font-size:28px;line-height:42px;color:#212121;font-weight:400;z-index:2;transform:scaleX(1.0080);">deploy</div>
<div class="t" style="left:1780px;top:1392.3px;font-size:28px;line-height:42px;color:#3174cb;font-weight:400;z-index:2;text-decoration:underline;text-underline-offset:3px;text-decoration-thickness:2px;transform:scaleX(1.0225);">test-project1-</div>
<div class="t" style="left:1780px;top:1434.3px;font-size:28px;line-height:42px;color:#3174cb;font-weight:400;z-index:2;text-decoration:underline;text-underline-offset:3px;text-decoration-thickness:2px;">develop-79</div>
<div class="t" style="left:2115px;top:1391.3px;font-size:28px;line-height:42px;color:#212121;font-weight:400;z-index:2;">02-15</div>
<div class="t" style="left:2115px;top:1433.3px;font-size:28px;line-height:42px;color:#212121;font-weight:400;z-index:2;">09:44:25</div>
<div class="t" style="left:2333px;top:1385.3px;font-size:28px;line-height:42px;color:#212121;font-weight:400;z-index:2;transform:scaleX(1.0300);">881ms778μs</div>
<div class="t" style="left:2358.6px;top:1434.3px;font-size:24px;line-height:32px;color:#ffffff;font-weight:400;z-index:2;transform:scaleX(0.8894);">SUCCESS</div>
<div class="t" style="left:2559px;top:1417.7px;font-size:24px;line-height:32px;color:#ffffff;font-weight:500;z-index:2;letter-spacing:2.14px;">查看日志</div>
<div class="t" style="left:660px;top:1565.3px;font-size:28px;line-height:42px;color:#212121;font-weight:400;z-index:2;transform:scaleX(1.0086);">check tp1-gin-demo ingress in test-env</div>
<div class="t" style="left:1362px;top:1565.3px;font-size:28px;line-height:42px;color:#212121;font-weight:400;z-index:2;transform:scaleX(1.0156);">checkIngress</div>
<div class="t" style="left:1580px;top:1519.3px;font-size:28px;line-height:42px;color:#3174cb;font-weight:400;z-index:2;text-decoration:underline;text-underline-offset:3px;text-decoration-thickness:2px;">tp1-gin-</div>
<div class="t" style="left:1580px;top:1561.3px;font-size:28px;line-height:42px;color:#3174cb;font-weight:400;z-index:2;text-decoration:underline;text-underline-offset:3px;text-decoration-thickness:2px;transform:scaleX(1.0283);">demo</div>
<div class="t" style="left:1580px;top:1611.3px;font-size:28px;line-height:42px;color:#212121;font-weight:400;z-index:2;transform:scaleX(1.0080);">deploy</div>
<div class="t" style="left:1780px;top:1544.3px;font-size:28px;line-height:42px;color:#3174cb;font-weight:400;z-index:2;text-decoration:underline;text-underline-offset:3px;text-decoration-thickness:2px;transform:scaleX(1.0225);">test-project1-</div>
<div class="t" style="left:1780px;top:1586.3px;font-size:28px;line-height:42px;color:#3174cb;font-weight:400;z-index:2;text-decoration:underline;text-underline-offset:3px;text-decoration-thickness:2px;">develop-79</div>
<div class="t" style="left:2115px;top:1543.3px;font-size:28px;line-height:42px;color:#212121;font-weight:400;z-index:2;">02-15</div>
<div class="t" style="left:2115px;top:1585.3px;font-size:28px;line-height:42px;color:#212121;font-weight:400;z-index:2;">09:44:24</div>
<div class="t" style="left:2333px;top:1537.3px;font-size:28px;line-height:42px;color:#212121;font-weight:400;z-index:2;transform:scaleX(1.0423);">1s2ms</div>
<div class="t" style="left:2358.6px;top:1586.3px;font-size:24px;line-height:32px;color:#ffffff;font-weight:400;z-index:2;transform:scaleX(0.8894);">SUCCESS</div>
<div class="t" style="left:2559px;top:1569.7px;font-size:24px;line-height:32px;color:#ffffff;font-weight:500;z-index:2;letter-spacing:2.14px;">查看日志</div>
<div style="position:absolute;left:1149px;top:151px;width:315px;height:132px;background:transparent;border-radius:12px;z-index:6;border:6px solid #e8412a;box-sizing:border-box;"></div>
<div style="position:absolute;left:1771px;top:885px;width:385px;height:219px;background:transparent;border-radius:12px;z-index:6;border:6px solid #e8412a;box-sizing:border-box;"></div>
<div style="position:absolute;left:537px;top:701px;width:2186px;height:432px;background:transparent;border-radius:14px;z-index:6;border:6px solid #e8412a;box-sizing:border-box;"></div>
<div style="position:absolute;left:2680px;top:0px;width:64px;height:1536px;background:linear-gradient(90deg,rgba(0,0,0,0) 0%,rgba(0,0,0,.02) 50%,rgba(0,0,0,.06) 100%);border-radius:0px;z-index:9;pointer-events:none;"></div>
<div style="position:absolute;left:2744px;top:116px;width:10px;height:1420px;background:rgba(0,0,0,.1);border-radius:0px;z-index:9;pointer-events:none;"></div>
</body></html>
